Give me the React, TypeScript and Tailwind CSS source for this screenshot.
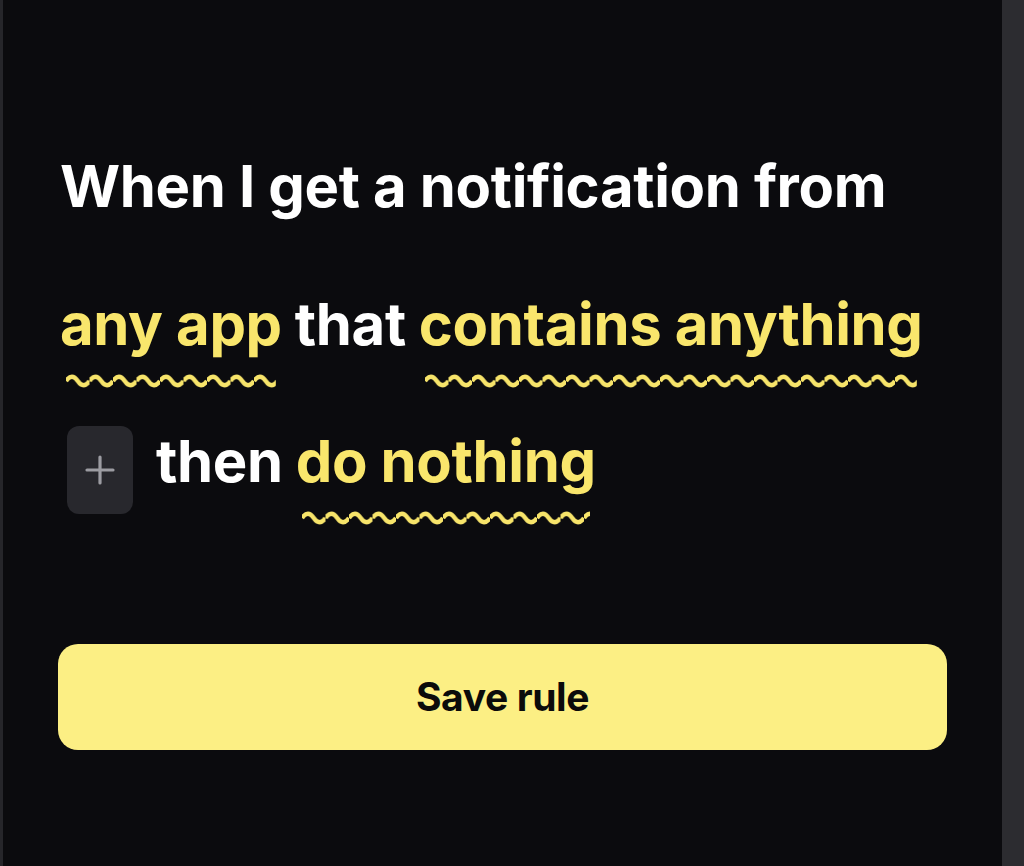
import React from "react"

// wavy underline: a tiled wave that stretches to the word's width
function Squiggle({ id }: { id: string }) {
  return (
    <svg width="100%" height="16" className="block">
      <defs>
        <pattern id={id} width="23.5" height="16" patternUnits="userSpaceOnUse">
          <path d="M0 8 Q5.875 -0.5 11.75 8 T23.5 8" fill="none" stroke="#f7e46a" strokeWidth="4.4" />
        </pattern>
      </defs>
      <rect width="100%" height="16" fill={`url(#${id})`} />
    </svg>
  )
}

function Token({ text, id }: { text: string; id: string }) {
  return (
    <span className="inline-flex flex-col whitespace-nowrap">
      <span className="text-[#f9e66c]">{text}</span>
      <span className="mt-[16px] h-[16px] w-0 min-w-full px-[6px]">
        <Squiggle id={id} />
      </span>
    </span>
  )
}

export default function App() {
  return (
    <div
      className="flex h-[866px] w-full overflow-hidden"
      style={{ fontFamily: "Inter, 'Noto Sans', sans-serif" }}
    >
      <div className="w-[3px] bg-[#26262a]" />
      <div className="flex-1 bg-[#0b0b0e] px-[55px] pt-[153px]">
        <div className="whitespace-nowrap pl-[2px] text-[58px] font-bold leading-[66px] tracking-[-0.006em] text-white">
          <p>When I get a notification from</p>

          <div className="mt-[72px] flex items-start gap-[13px]">
            <Token text="any app" id="w1" />
            <span>that</span>
            <Token text="contains anything" id="w2" />
          </div>

          <div className="mt-[37px] -ml-[2px] flex items-start">
            <button className="ml-[9px] flex h-[88px] w-[66px] items-center justify-center rounded-[12px] bg-[#28282d]">
              <svg width="32" height="32" viewBox="0 0 32 32">
                <path d="M16 3v26M3 16h26" stroke="#9c9ca2" strokeWidth="3.2" strokeLinecap="round" />
              </svg>
            </button>
            <div className="ml-[23px] mt-[2px] flex items-start gap-[13px]">
              <span>then</span>
              <Token text="do nothing" id="w3" />
            </div>
          </div>
        </div>

        <button className="mt-[118px] flex h-[106px] w-full items-center justify-center rounded-[20px] bg-[#fcef84]">
          <span className="text-[39px] font-bold tracking-[-0.01em] text-[#0b0b0b]">Save rule</span>
        </button>
      </div>
      <div className="w-[22px] bg-[#2c2c30]" />
    </div>
  )
}
